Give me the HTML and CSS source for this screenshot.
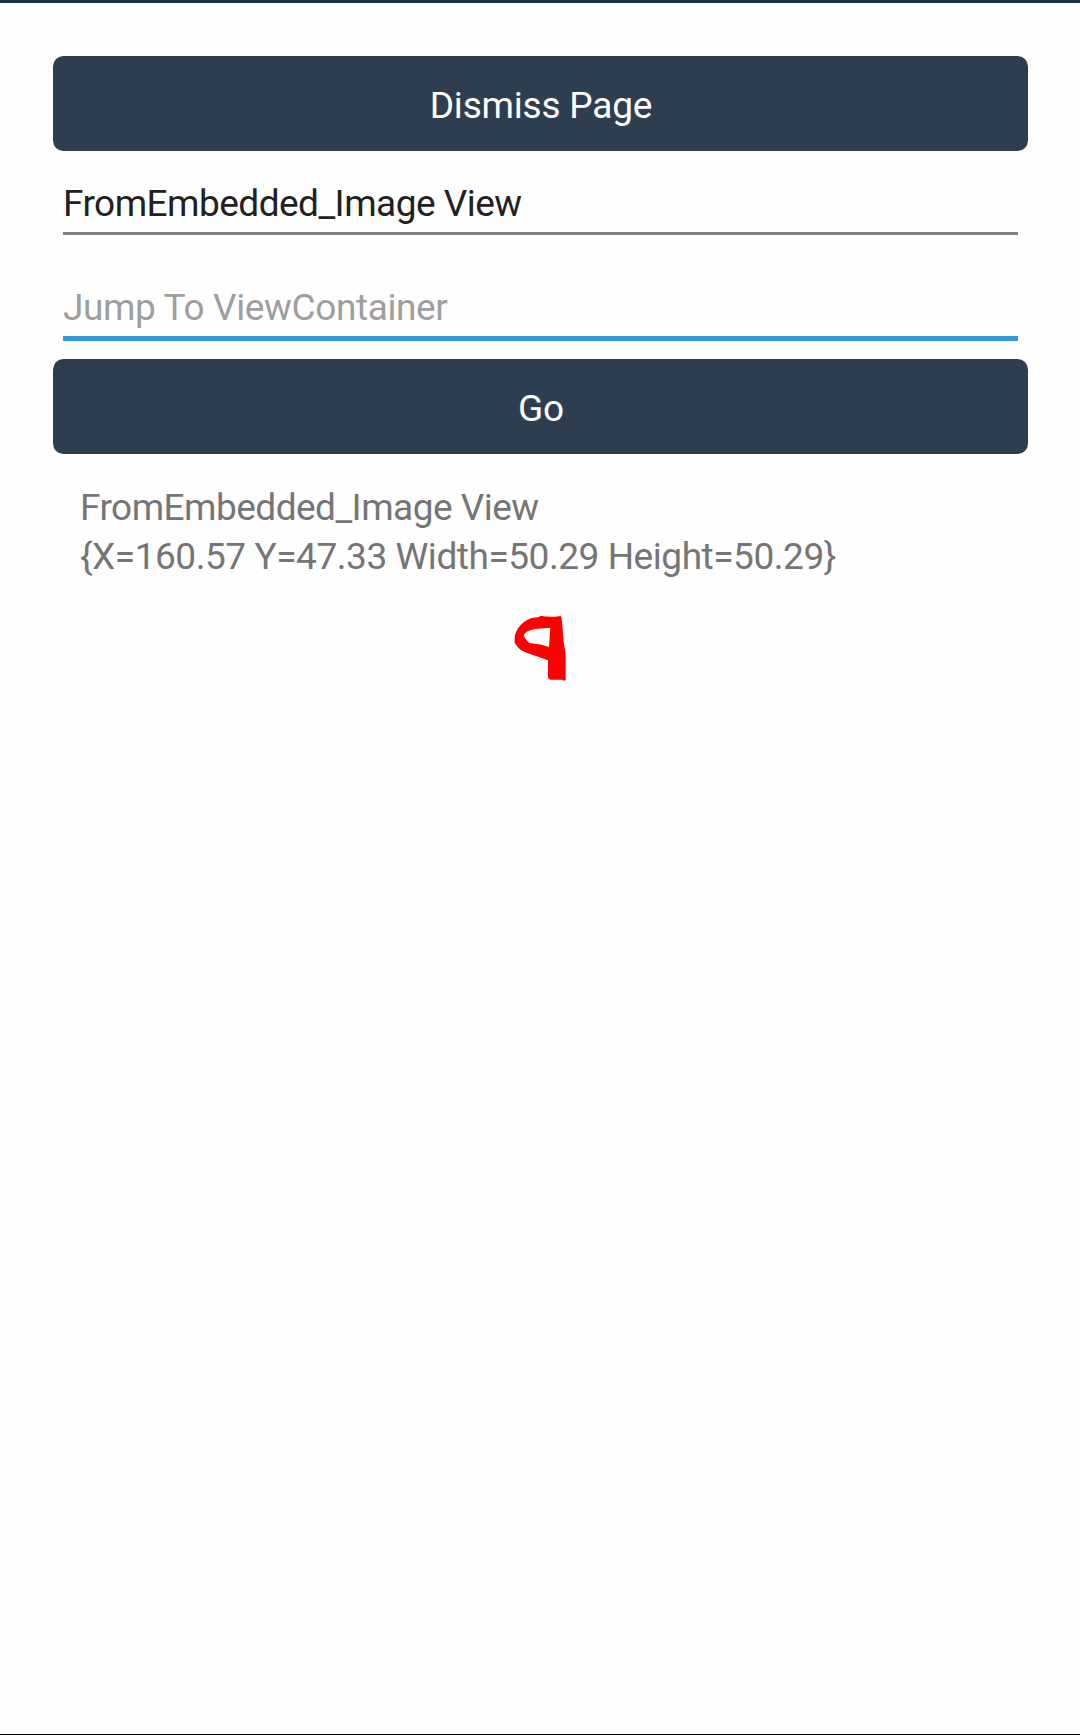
FILE: index.html
```html
<!DOCTYPE html>
<html lang="en">
<head>
<meta charset="utf-8">
<title>View Container</title>
<link rel="stylesheet" href="styles.css">
</head>
<body>
<main class="page">
  <button class="button" type="button">Dismiss Page</button>
  <div class="entry">FromEmbedded_Image View</div>
  <div class="entry entry-focused">Jump To ViewContainer</div>
  <button class="button" type="button">Go</button>
  <div class="details">
    <div class="details-name">FromEmbedded_Image View</div>
    <div class="details-frame">{X=160.57 Y=47.33 Width=50.29 Height=50.29}</div>
  </div>
  <svg class="picture" width="80" height="90" viewBox="0 0 240 270" aria-hidden="true">
    <path fill="#f00" fill-rule="evenodd" d="M119 47Q140 51 166 50L182 48L185 53L191 126L197 162V240L191 242L187 239H151L144 234V181L82 159Q61 151 52 140L44 128V112C47 84 73 58 99 53L118 51ZM151 83L113 86C91 88 76 95 72 104Q71 113 88 129L125 134L147 141Z"/>
  </svg>
</main>
</body>
</html>
```
FILE: styles.css
```css
* {
  box-sizing: border-box;
}

body {
  margin: 0;
  background: #fefefe;
  font-family: Roboto, sans-serif;
  font-size: 37px;
  line-height: 49px;
}

.page {
  display: flex;
  flex-direction: column;
  height: 1735px;
  padding: 53px 52px 0 53px;
  border-top: 3px solid #1b3147;
  border-bottom: 1px solid #000;
}

.button {
  flex: none;
  height: 95px;
  padding: 4px 0 0 1px;
  border: 0;
  border-radius: 10.5px;
  background: #2d3e50;
  color: #fff;
  font: inherit;
  letter-spacing: -0.2px;
}

.entry {
  flex: none;
  height: 56px;
  margin: 28px 10px 0;
  border-bottom: 3px solid #7f7f7f;
  color: #212121;
  letter-spacing: -0.53px;
}

.entry-focused {
  height: 58px;
  margin: 48px 10px 18px;
  border-bottom: 5px solid #3498db;
  color: #9e9e9e;
  letter-spacing: -0.38px;
}

.details {
  margin: 29px 26px 0 27px;
  color: #757575;
}

.details-name {
  letter-spacing: -0.53px;
}

.details-frame {
  letter-spacing: -0.45px;
}

.picture {
  display: block;
  margin: 19px 0 0 447px;
}
```
